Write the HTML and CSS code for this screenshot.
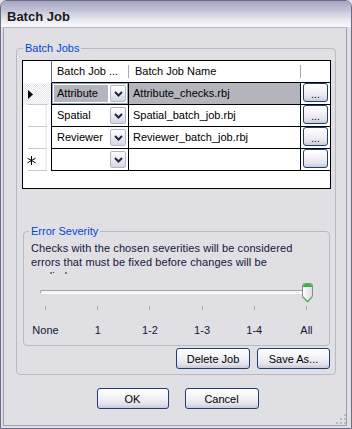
FILE: index.html
```html
<!DOCTYPE html>
<html lang="en">
<head>
    <meta charset="UTF-8">
    <title>Batch Job</title>
    <link rel="stylesheet" href="styles.css">
</head>
<body>
<div class="window">
    <div class="titlebar">Batch Job</div>
    <div class="client">
        <fieldset class="group jobs">
            <legend>Batch Jobs</legend>
            <div class="grid">
                <div class="hdr corner"></div>
                <div class="hdr col">Batch Job ...</div>
                <div class="hdr col">Batch Job Name</div>
                <div class="hdr col last"></div>

                <div class="rowhdr current">
                    <svg width="5" height="9" viewBox="0 0 5 9"><polygon points="0,0 5,4.5 0,9" fill="#000"/></svg>
                </div>
                <div class="cell">
                    <div class="combo focused">
                        <span class="val">Attribute</span>
                        <span class="drop"><svg width="9" height="6" viewBox="0 0 9 6"><polyline points="1,1 4.5,4.5 8,1" fill="none" stroke="#242448" stroke-width="2"/></svg></span>
                    </div>
                </div>
                <div class="cell name selected">Attribute_checks.rbj</div>
                <div class="cell last"><button class="btn dots">...</button></div>

                <div class="rowhdr"></div>
                <div class="cell">
                    <div class="combo">
                        <span class="val">Spatial</span>
                        <span class="drop"><svg width="9" height="6" viewBox="0 0 9 6"><polyline points="1,1 4.5,4.5 8,1" fill="none" stroke="#242448" stroke-width="2"/></svg></span>
                    </div>
                </div>
                <div class="cell name">Spatial_batch_job.rbj</div>
                <div class="cell last"><button class="btn dots">...</button></div>

                <div class="rowhdr"></div>
                <div class="cell">
                    <div class="combo">
                        <span class="val">Reviewer</span>
                        <span class="drop"><svg width="9" height="6" viewBox="0 0 9 6"><polyline points="1,1 4.5,4.5 8,1" fill="none" stroke="#242448" stroke-width="2"/></svg></span>
                    </div>
                </div>
                <div class="cell name">Reviewer_batch_job.rbj</div>
                <div class="cell last"><button class="btn dots">...</button></div>

                <div class="rowhdr newrow">
                    <svg width="9" height="9" viewBox="0 0 9 9"><g stroke="#000" stroke-width="1"><line x1="4.5" y1="0" x2="4.5" y2="9"/><line x1="0.5" y1="2.2" x2="8.5" y2="6.8"/><line x1="0.5" y1="6.8" x2="8.5" y2="2.2"/></g></svg>
                </div>
                <div class="cell">
                    <div class="combo">
                        <span class="val"></span>
                        <span class="drop"><svg width="9" height="6" viewBox="0 0 9 6"><polyline points="1,1 4.5,4.5 8,1" fill="none" stroke="#242448" stroke-width="2"/></svg></span>
                    </div>
                </div>
                <div class="cell name"></div>
                <div class="cell last"><button class="btn dots"></button></div>
            </div>

            <fieldset class="group severity">
                <legend>Error Severity</legend>
                <div class="desc">Checks with the chosen severities will be considered errors that must be fixed before changes will be applied.</div>
                <div class="slider">
                    <div class="track"></div>
                    <svg class="thumb" width="11" height="20" viewBox="0 0 11 20">
                        <defs>
                            <linearGradient id="tg" x1="0" y1="0" x2="1" y2="0">
                                <stop offset="0" stop-color="#ffffff"/>
                                <stop offset="1" stop-color="#dcdce2"/>
                            </linearGradient>
                        </defs>
                        <path d="M0.5 2.5 Q0.5 0.5 2.5 0.5 H8.5 Q10.5 0.5 10.5 2.5 V13.5 L5.5 19 L0.5 13.5 Z" fill="url(#tg)" stroke="#8c8c94"/>
                        <path d="M1 3 Q1 1 3 1 H8 Q10 1 10 3 V4 H1 Z" fill="#3cb53c"/>
                        <path d="M0.8 13.6 L5.5 18.6 L10.2 13.6" fill="none" stroke="#3cb53c" stroke-width="1.2"/>
                    </svg>
                </div>
                <div class="ticks">
                    <span></span><span></span><span></span><span></span><span></span><span></span>
                </div>
                <div class="labels">
                    <span><b>None</b></span><span><b>1</b></span><span><b>1-2</b></span><span><b>1-3</b></span><span><b>1-4</b></span><span><b>All</b></span>
                </div>
            </fieldset>

            <div class="actions">
                <button class="btn delete">Delete Job</button>
                <button class="btn save">Save As...</button>
            </div>
        </fieldset>

        <div class="dialog-buttons">
            <button class="btn ok">OK</button>
            <button class="btn cancel">Cancel</button>
        </div>
    </div>
    <svg class="grip" width="10" height="10" viewBox="0 0 10 10">
        <g fill="#b8b8c4">
            <rect x="8" y="0" width="2" height="2"/>
            <rect x="4" y="4" width="2" height="2"/><rect x="8" y="4" width="2" height="2"/>
            <rect x="0" y="8" width="2" height="2"/><rect x="4" y="8" width="2" height="2"/><rect x="8" y="8" width="2" height="2"/>
        </g>
    </svg>
</div>
</body>
</html>
```

FILE: styles.css
```css
* {
    box-sizing: border-box;
}

html, body {
    margin: 0;
    padding: 0;
}

body {
    font-family: "Liberation Sans", Arial, sans-serif;
    font-size: 11px;
    color: #000;
    background: #e0dfe3;
}

.window {
    width: 352px;
    height: 429px;
    background: #e0dfe3;
    border: 1px solid #6b6b85;
    border-radius: 7px 7px 0 0;
    display: flex;
    flex-direction: column;
    position: relative;
    overflow: hidden;
}

.titlebar {
    height: 26px;
    flex: none;
    padding: 5px 0 0 6px;
    font-size: 13px;
    font-weight: bold;
    line-height: 21px;
    color: #1b1b1b;
    background: linear-gradient(#a5a5c2, #c2c2d6 35%, #e6e6ee 70%, #fbfbfd);
}

.client {
    flex: 1;
    margin: 0 4px 2px 2px;
    border: 1px solid #9d9db5;
    border-top-color: #b4b4c6;
}

/* group boxes */

fieldset.group {
    margin: 0;
    min-width: 0;
    border: 1px solid #b9b9c3;
    border-radius: 4px;
}

fieldset.group legend {
    padding: 0 2px;
    color: #0046d5;
    line-height: 13px;
}

.jobs {
    width: 320px;
    margin: 14px 0 0 12px !important;
    padding: 5px 4px 5px 5px;
}

.jobs > legend {
    margin-left: 1px;
}

/* grid */

.grid {
    width: 309px;
    height: 129px;
    border: 1px solid #000;
    background: #fff;
    display: grid;
    grid-template-columns: 29px 77px 172px 29px;
    grid-auto-rows: 22px;
    align-content: start;
}

.hdr {
    position: relative;
    line-height: 21px;
    color: #000;
}

.hdr.corner {
    border-right: 1px solid #6a6a6a;
}

.hdr.col {
    border-bottom: 1px solid #000;
    padding-left: 5px;
}

.hdr.col:not(.last)::after {
    content: "";
    position: absolute;
    right: 0;
    top: 4px;
    width: 1px;
    height: 13px;
    background: #a8a8b0;
}

.hdr.col:nth-child(3) {
    padding-left: 6px;
}

.rowhdr {
    border-right: 1px solid #000;
    display: flex;
    align-items: center;
    padding-left: 5px;
    background:
        linear-gradient(#c8c8d0, #c8c8d0) 5px 100% / 19px 1px no-repeat,
        repeating-conic-gradient(#e2e2e6 0 25%, #fff 0 50%) 22px 0 / 2px 2px,
        #fff;
    background-repeat: no-repeat, repeat-y, no-repeat;
}

.rowhdr.current {
    background:
        linear-gradient(#c8c8d0, #c8c8d0) 5px 100% / 19px 1px no-repeat,
        repeating-conic-gradient(#e4e4e8 0 25%, #fff 0 50%) 0 0 / 2px 2px;
}

.rowhdr.newrow {
    padding-left: 4px;
}

.cell {
    border-right: 1px solid #000;
    border-bottom: 1px solid #000;
    line-height: 21px;
    white-space: nowrap;
    overflow: hidden;
}

.cell.last {
    border-right: none;
    padding: 0 0 0 2px;
}

.cell.name {
    padding-left: 4px;
}

.cell.selected {
    background: #b4b4bc;
}

.combo {
    display: flex;
    height: 21px;
    padding: 1px;
    border: 1px solid transparent;
}

.combo.focused {
    border-color: #8fa6c4;
}

.combo .val {
    flex: 1;
    padding-left: 3px;
    line-height: 17px;
}

.combo.focused .val {
    background: #b4b4bc;
    margin-right: 2px;
}

.combo .drop {
    width: 16px;
    height: 17px;
    border: 1px solid #b2b6c8;
    border-radius: 2px;
    background: linear-gradient(#ffffff, #ececf2 50%, #d6d6e2);
    display: flex;
    align-items: center;
    justify-content: center;
}

/* buttons */

.btn {
    height: 21px;
    padding: 0;
    border: 1px solid #1f3f72;
    border-radius: 3px;
    background: linear-gradient(#ffffff, #f4f4f8 40%, #e2e2ea 80%, #c9c9d8);
    font-family: "Liberation Sans", Arial, sans-serif;
    font-size: 11px;
    color: #000;
}

.btn.dots {
    width: 25px;
    height: 19px;
    display: block;
    font-size: 10px;
    line-height: 15px;
    padding-top: 3px;
}

/* error severity */

.severity {
    width: 307px;
    margin: 36px 0 0 1px !important;
    padding: 0 0 8px 0;
}

.severity > legend {
    margin-left: 5px;
}

.desc {
    margin: 3px 0 0 7px;
    width: 268px;
    height: 33px;
    overflow: hidden;
    line-height: 14px;
    letter-spacing: 0.1px;
    color: #15153a;
}

.slider {
    position: relative;
    margin: 9px 0 0 16px;
    padding-top: 7px;
    width: 270px;
    height: 20px;
}

.track {
    height: 4px;
    border: 1px solid #a2a2aa;
    border-right-color: #e8e8ee;
    border-bottom-color: #fff;
    border-radius: 2px 0 0 2px;
    background: #f6f6f8;
}

.thumb {
    position: absolute;
    left: 262px;
    top: 0;
}

.ticks,
.labels {
    margin-left: 21px;
    width: 262px;
    display: flex;
    justify-content: space-between;
}

.ticks {
    margin-top: 3px;
    height: 4px;
}

.ticks span {
    width: 1px;
    background: #a8a8b0;
}

.labels {
    margin-top: 14px;
    line-height: 13px;
    color: #15153a;
}

.labels span {
    width: 1px;
    display: flex;
    justify-content: center;
}

.labels b {
    font-weight: normal;
    white-space: nowrap;
}

/* action rows */

.actions {
    display: flex;
    justify-content: flex-end;
    gap: 7px;
    margin: 2px 1px 0 0;
}

.btn.delete {
    width: 74px;
}

.btn.save {
    width: 73px;
}

.dialog-buttons {
    display: flex;
    justify-content: center;
    gap: 16px;
    margin-top: 13px;
    padding-left: 5px;
}

.btn.ok {
    width: 72px;
}

.btn.cancel {
    width: 74px;
}

.grip {
    position: absolute;
    right: 5px;
    bottom: 4px;
}
```
